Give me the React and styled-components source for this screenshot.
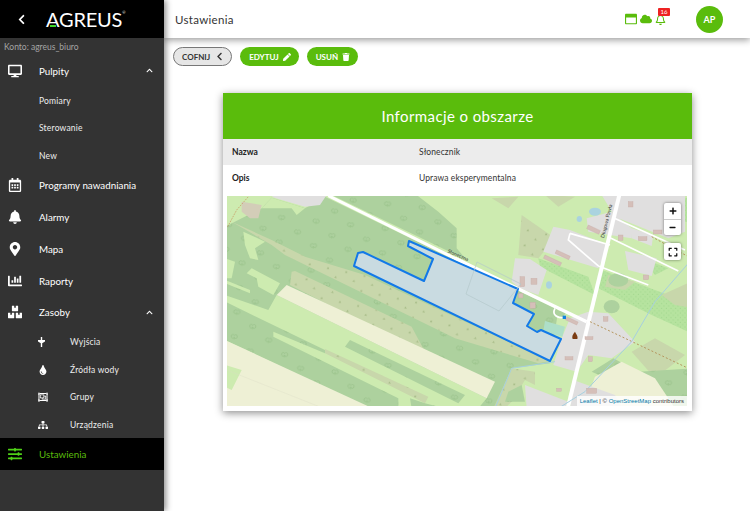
import React from 'react';
import styled, { createGlobalStyle } from 'styled-components';
import {
    FaDesktop, FaChevronUp, FaChevronLeft, FaRegCalendarAlt, FaBell, FaMapMarkerAlt, FaChartBar,
    FaBoxes, FaTint, FaRegObjectGroup, FaSitemap, FaSlidersH, FaPen, FaTrash, FaCloud,
    FaRegWindowMaximize, FaRegBell, FaPlus, FaMinus, FaExpand,
} from 'react-icons/fa';

const GREEN = '#5abc0c';
const FONT = 'Lato, "Open Sans", sans-serif';

const GlobalStyle = createGlobalStyle`
    html, body { margin: 0; padding: 0; background: #fff; }
    * { box-sizing: border-box; }
    body { font-family: ${FONT}; overflow: hidden; }
`;

const PlugIcon = () => (
    <svg width="7" height="10" viewBox="0 0 7 10" fill="#fff">
        <path d="M2.800 0h1.400v3H7v1.400L4.200 6.200V10H2.800V6.200L0 4.400V3h2.800z" />
    </svg>
);

const menu = [
    { label: 'Pulpity', icon: <FaDesktop />, open: true, children: [{ label: 'Pomiary' }, { label: 'Sterowanie' }, { label: 'New' }] },
    { label: 'Programy nawadniania', icon: <FaRegCalendarAlt /> },
    { label: 'Alarmy', icon: <FaBell /> },
    { label: 'Mapa', icon: <FaMapMarkerAlt /> },
    { label: 'Raporty', icon: <FaChartBar /> },
    {
        label: 'Zasoby', icon: <FaBoxes />, open: true, children: [
            { label: 'Wyjścia', icon: <PlugIcon /> },
            { label: 'Źródła wody', icon: <FaTint /> },
            { label: 'Grupy', icon: <FaRegObjectGroup /> },
            { label: 'Urządzenia', icon: <FaSitemap /> },
        ],
    },
];

const forest = '#add19e';
const grass = '#cdebb0';
const farm = '#eef0d5';
const scrub = '#c8d7ab';
const built = '#e0dfdf';

const Wood = ({ points }) => (
    <>
        <polygon points={points} fill={forest} />
        <polygon points={points} fill="url(#trees)" />
    </>
);

const Scrub = ({ points }) => (
    <>
        <polygon points={points} fill={scrub} />
        <polygon points={points} fill="url(#shrubs)" />
    </>
);

// geometry is in 3x coordinates; the right hand group starts 690 further along
const AreaMap = () => (
    <MapSvg viewBox="0 0 460 210" preserveAspectRatio="none">
        <defs>
            <pattern id="trees" width="104" height="74" patternUnits="userSpaceOnUse" patternTransform="rotate(6)">
                <g fill="none" stroke="#94bf85" strokeWidth="2">
                    <path d="M20 10c-5-6-12 0-8 7c2 3 5 2 8-1c3 3 6 4 8 1c4-7-3-13-8-7zM20 16v6" />
                    <path d="M72 46c-5-6-12 0-8 7c2 3 5 2 8-1c3 3 6 4 8 1c4-7-3-13-8-7zM72 52v6" />
                </g>
            </pattern>
            <pattern id="shrubs" width="56" height="46" patternUnits="userSpaceOnUse" patternTransform="rotate(12)">
                <path d="M12 8l4 7h-8zM40 30l4 7h-8z" fill="#a7bc88" />
            </pattern>
            <pattern id="meadow" width="14" height="14" patternUnits="userSpaceOnUse">
                <rect width="14" height="14" fill="#b6e39f" />
                <circle cx="4" cy="4" r="1.600" fill="#9fd68c" />
                <circle cx="11" cy="11" r="1.600" fill="#9fd68c" />
            </pattern>
        </defs>
        <rect width="460" height="210" fill={grass} />

        <g transform="translate(-2 -1) scale(0.3333)">
            <Wood points="0,95 50,70 110,40 140,8 240,40 300,5 1000,345 975,505 860,520 810,640 0,640" />
            <Wood points="330,0 575,0 640,50 695,100 695,160 725,195 320,0" />
            <polygon points="55,110 120,140 90,160 100,195 75,190 60,150" fill={grass} />
            <polygon points="0,190 30,200 20,250 0,250" fill={grass} />
            <polygon points="65,235 80,220 165,265 145,300 100,275 95,250" fill={grass} />
            <polygon points="0,265 75,295 75,285 0,255" fill={grass} />
            <Scrub points="20,80 140,135 240,185 420,240 975,498 940,505 690,430 180,180 140,150" />
            <Scrub points="200,230 210,228 560,395 600,470 400,375 195,270" />
            <polygon points="0,300 130,345 155,300 785,610 760,640 0,640" fill={grass} />
            <polygon points="155,300 185,270 810,560 785,610" fill={farm} />
            <Wood points="0,320 300,465 300,475 145,410 145,425 520,610 520,640 430,640 0,435" />
            <Wood points="360,455 375,435 720,600 700,625" />
            <Scrub points="300,462 610,605 600,625 300,475" />
            <polygon points="0,435 430,634 0,640" fill={farm} />
            <polygon points="0,510 50,525 20,585 0,575" fill={grass} />
            <Wood points="555,610 600,625 660,640 560,640" />
            <polygon points="50,20 110,30 100,70 75,70 50,50" fill="#d3cdb8" />
            <polygon points="140,5 155,0 305,0 285,30 240,35 160,12" fill={built} />
            <polygon points="110,40 140,8 240,40 215,60 200,40" fill={grass} />
            <path d="M8 95L35 45L70 5" stroke="#c98f5a" strokeWidth="2" strokeDasharray="5 3" fill="none" />
            <path d="M310 2L720 205" stroke="#fff" strokeWidth="9" fill="none" />
            <path d="M5 525L280 634" stroke="#dcdcc4" strokeWidth="1" fill="none" />
        </g>

        <g transform="translate(228 -1) scale(0.3333)">
            <polygon points="110,10 190,5 160,40" fill={scrub} />
            <Scrub points="200,60 300,130 250,190 190,180" />
            <polygon points="270,0 360,5 310,35" fill={scrub} />
            <polygon points="250,190 400,245 420,300 380,280 255,215" fill="url(#meadow)" />
            <polygon points="275,145 300,150 285,175 270,170" fill="url(#meadow)" />
            <polygon points="440,225 720,330 720,420 590,360 430,280" fill="url(#meadow)" />
            <polygon points="560,190 640,220 600,240" fill="url(#meadow)" />
            <polygon points="660,20 720,0 720,80 690,80" fill="url(#meadow)" />
            <polygon points="460,240 540,260 510,285 450,275" fill={scrub} />
            <polygon points="620,300 720,255 720,340 660,330" fill={scrub} />
            <polygon points="530,470 600,430 690,480 600,550" fill={scrub} />
            <Wood points="475,490 550,530 720,520 720,640 660,640 410,530" />
            <polygon points="420,545 500,500 600,550 660,640 385,640" fill={farm} />
            <Scrub points="170,520 240,530 240,570 210,555 170,620 150,640 115,640" />
            <Wood points="160,590 200,570 210,620 150,620" />

            <polygon points="180,190 225,192 275,225 250,300 195,280 170,260" fill={built} />
            <polygon points="295,95 345,105 460,150 430,220 265,170" fill={built} />
            <polygon points="395,70 470,50 530,100 530,130 400,110" fill={built} />
            <polygon points="440,0 690,0 690,110 640,130 480,65" fill={built} />
            <polygon points="525,98 595,120 590,153 530,130" fill={built} />
            <polygon points="510,168 605,190 590,243 520,225" fill={built} />
            <polygon points="400,350 460,355 540,440 470,490 400,480 365,530 295,510 320,430 345,370" fill={built} />
            <polygon points="355,555 480,600 500,640 345,640" fill={built} />
            <polygon points="210,570 340,620 330,640 215,640" fill={built} />
            <polygon points="270,378 330,395 322,425 265,408" fill="#aedfc8" />
            <polygon points="300,345 335,350 320,370 300,362" fill={forest} />
            <ellipse cx="420" cy="50" rx="18" ry="12" fill="#aad3df" />
            <ellipse cx="373" cy="72" rx="8" ry="9" fill="#aad3df" />
            <ellipse cx="282" cy="270" rx="9" ry="11" fill="#aad3df" />
            <ellipse cx="470" cy="335" rx="24" ry="20" fill={forest} />
            <ellipse cx="490" cy="255" rx="30" ry="20" fill={forest} />

            <path d="M0 190L395 380" stroke="#fff" strokeWidth="10" fill="none" />
            <path d="M493 0L338 640" stroke="#fff" strokeWidth="12" fill="none" />
            <path d="M475 68L690 165M465 128L670 228M430 213L580 270M345 115L465 150M345 115L340 135L430 213" stroke="#fff" strokeWidth="5" fill="none" />
            <path d="M300 340C290 360 305 370 335 368" stroke="#fff" strokeWidth="5" fill="none" />
            <path d="M405 380L700 520M590 125L700 185" stroke="#b5965e" strokeWidth="3" strokeDasharray="6 6" fill="none" />
            <path d="M700 205L600 320L530 440L390 590L310 640M120 640L170 520L300 500" stroke="#a6cfdf" strokeWidth="3" fill="none" />
            <g fill="#d5bfb9" stroke="#c5a9a3" strokeWidth="1">
                <rect x="400" y="90" width="40" height="12" transform="rotate(25 400 90)" />
                <rect x="305" y="165" width="45" height="11" transform="rotate(25 305 165)" />
                <rect x="270" y="180" width="55" height="11" transform="rotate(25 270 180)" />
                <rect x="195" y="245" width="14" height="30" />
                <rect x="228" y="250" width="18" height="18" />
                <rect x="190" y="295" width="14" height="14" />
                <rect x="225" y="322" width="16" height="18" />
                <rect x="335" y="365" width="38" height="10" transform="rotate(25 335 365)" />
                <rect x="390" y="425" width="24" height="9" />
                <rect x="400" y="485" width="12" height="15" />
                <rect x="330" y="485" width="24" height="10" />
                <rect x="490" y="120" width="14" height="16" />
                <rect x="550" y="125" width="26" height="12" />
                <rect x="595" y="105" width="26" height="12" />
                <rect x="565" y="240" width="16" height="14" />
                <rect x="445" y="365" width="14" height="14" />
                <rect x="395" y="580" width="30" height="15" />
                <rect x="305" y="580" width="14" height="9" />
                <rect x="520" y="20" width="14" height="16" />
            </g>
            <rect x="323" y="362" width="10" height="10" fill="#1282e0" />
            <path d="M360 410c-7 8-10 14-7 22h14c3-8-3-14-7-22z" fill="#7a3b12" />
        </g>

        <polygon
            points="182,45 181,50 206,63 197,85 136,56 131,57 127,70 323,165 334,143 314,134 310,136 300,130 307,118 286,107 291,93"
            fill="#c9dbe1" stroke="#1279e8" strokeWidth="2" strokeLinejoin="round"
        />
        <path d="M239 98L250 66L294 88L272 115z" stroke="#b4c8cb" strokeWidth="0.700" fill="none" />
    </MapSvg>
);

const App = () => (
    <>
        <GlobalStyle />
        <Page>
            <Sidebar>
                <LogoBar>
                    <BackArrow><FaChevronLeft /></BackArrow>
                    <Logo>
                        AGREUS<LogoMark>®</LogoMark>
                        <LogoDash />
                    </Logo>
                </LogoBar>
                <Account>Konto: agreus_biuro</Account>
                <nav>
                    {menu.map((item) => (
                        <React.Fragment key={item.label}>
                            <NavItem>
                                <NavIcon>{item.icon}</NavIcon>
                                <NavLabel>{item.label}</NavLabel>
                                {item.open && <Caret><FaChevronUp /></Caret>}
                            </NavItem>
                            {item.children && item.children.map((child) => (
                                <SubItem key={child.label} $withIcon={!!child.icon}>
                                    {child.icon && <SubIcon>{child.icon}</SubIcon>}
                                    {child.label}
                                </SubItem>
                            ))}
                        </React.Fragment>
                    ))}
                    <NavItem $active>
                        <NavIcon $active><FaSlidersH /></NavIcon>
                        <NavLabel>Ustawienia</NavLabel>
                    </NavItem>
                </nav>
            </Sidebar>
            <Main>
                <TopBar>
                    <Title>Ustawienia</Title>
                    <StatusIcons>
                        <FaRegWindowMaximize size={12} />
                        <FaCloud size={12} />
                        <BellWrap>
                            <FaRegBell size={11} />
                            <Badge>16</Badge>
                        </BellWrap>
                    </StatusIcons>
                    <Avatar>AP</Avatar>
                </TopBar>
                <Actions>
                    <BackButton>COFNIJ <FaChevronLeft size={9} /></BackButton>
                    <ActionButton>EDYTUJ <FaPen size={8} /></ActionButton>
                    <ActionButton>USUŃ <FaTrash size={8} /></ActionButton>
                </Actions>
                <Card>
                    <CardTitle>Informacje o obszarze</CardTitle>
                    <InfoRow $shaded>
                        <InfoKey>Nazwa</InfoKey>
                        <InfoValue>Słonecznik</InfoValue>
                    </InfoRow>
                    <InfoRow>
                        <InfoKey>Opis</InfoKey>
                        <InfoValue>Uprawa eksperymentalna</InfoValue>
                    </InfoRow>
                    <MapBox>
                        <AreaMap />
                        <RoadName>Słoneczna</RoadName>
                        <SideRoadName>Długowa Pawła</SideRoadName>
                        <ZoomGroup>
                            <ZoomBtn><FaPlus size={8} /></ZoomBtn>
                            <ZoomBtn><FaMinus size={7} /></ZoomBtn>
                        </ZoomGroup>
                        <FullBtn><FaExpand size={10} /></FullBtn>
                        <Attribution><b>Leaflet</b> | © <b>OpenStreetMap</b> contributors</Attribution>
                    </MapBox>
                </Card>
            </Main>
        </Page>
    </>
);

export default App;

const Page = styled.div`
    width: 750px;
    height: 511px;
    display: flex;
    overflow: hidden;
`;

const Sidebar = styled.aside`
    width: 164px;
    flex: none;
    background: #333;
    color: #fff;
    box-shadow: 2px 0 6px rgba(0, 0, 0, 0.45);
    position: relative;
    z-index: 2;
`;

const LogoBar = styled.div`
    height: 38px;
    background: #000;
    display: flex;
    align-items: center;
    padding-left: 16px;
`;

const BackArrow = styled.span`
    width: 30px;
    font-size: 11px;
    display: flex;
`;

const Logo = styled.div`
    position: relative;
    font-size: 20px;
    font-weight: 400;
    letter-spacing: -0.2px;
    line-height: 1;
`;

const LogoMark = styled.sup`
    font-size: 4px;
    vertical-align: 13px;
    line-height: 0;
`;

const LogoDash = styled.span`
    position: absolute;
    left: 4px;
    bottom: 2px;
    width: 6px;
    height: 2px;
    background: #3fd62a;
`;

const Account = styled.div`
    height: 17px;
    padding-left: 4px;
    font-size: 8.500px;
    line-height: 18px;
    color: #a5a5a5;
`;

const NavItem = styled.div`
    height: ${(p) => (p.$active ? '32px' : '31.8px')};
    display: flex;
    align-items: center;
    padding-right: 10px;
    background: ${(p) => (p.$active ? '#000' : 'transparent')};
    color: ${(p) => (p.$active ? GREEN : '#fff')};
`;

const NavIcon = styled.span`
    width: 39px;
    flex: none;
    display: flex;
    justify-content: center;
    padding-right: 9px;
    font-size: 14px;
    color: ${(p) => (p.$active ? '#4fd117' : '#fff')};
`;

const NavLabel = styled.span`
    flex: 1;
    font-size: 9.800px;
    font-weight: 400;
`;

const Caret = styled.span`
    display: flex;
    font-size: 7px;
    margin-right: 1px;
`;

const SubItem = styled.div`
    height: 27.500px;
    display: flex;
    align-items: center;
    font-size: 8.500px;
    letter-spacing: 0.2px;
    padding-left: ${(p) => (p.$withIcon ? '35px' : '39px')};
    color: #eee;
`;

const SubIcon = styled.span`
    width: 35px;
    flex: none;
    display: flex;
    padding-left: 3px;
    font-size: 10px;
    color: #fff;
`;

const Main = styled.main`
    flex: 1;
    min-width: 0;
    background: #fff;
`;

const TopBar = styled.header`
    height: 38px;
    display: flex;
    align-items: center;
    padding: 0 27px 0 11px;
    box-shadow: 0 2px 7px rgba(0, 0, 0, 0.4);
`;

const Title = styled.h1`
    flex: 1;
    margin: 0;
    font-size: 11.500px;
    font-weight: 400;
    letter-spacing: 0.3px;
    color: #333;
`;

const StatusIcons = styled.div`
    display: flex;
    align-items: center;
    gap: 2.500px;
    color: ${GREEN};
    margin-right: 30px;
`;

const BellWrap = styled.span`
    position: relative;
    display: flex;
    margin-left: 1px;
`;

const Badge = styled.span`
    position: absolute;
    left: 3px;
    top: -6px;
    width: 12px;
    height: 8px;
    border-radius: 1px;
    background: #ee2222;
    color: #fff;
    font-size: 6px;
    line-height: 8px;
    text-align: center;
`;

const Avatar = styled.div`
    width: 27px;
    height: 27px;
    border-radius: 50%;
    background: ${GREEN};
    color: #fff;
    font-size: 9px;
    font-weight: 700;
    display: flex;
    align-items: center;
    justify-content: center;
`;

const Actions = styled.div`
    display: flex;
    gap: 8px;
    padding: 9px 0 0 9px;
    height: 55px;
`;

const ActionButton = styled.button`
    height: 19px;
    padding: 0 8px 0 9px;
    border: 0;
    border-radius: 10px;
    background: ${GREEN};
    color: #fff;
    font-family: ${FONT};
    font-size: 8px;
    font-weight: 700;
    display: flex;
    align-items: center;
    gap: 4px;
`;

const BackButton = styled(ActionButton)`
    background: #e6e6e6;
    color: #333;
    border: 1px solid #777;
    padding: 0 7px 0 8px;
    gap: 5px;
`;

const Card = styled.section`
    width: 469px;
    height: 318px;
    margin-left: 59px;
    background: #fff;
    box-shadow: 0 2px 8px rgba(0, 0, 0, 0.45);
`;

const CardTitle = styled.h2`
    margin: 0;
    height: 46px;
    background: ${GREEN};
    color: #fff;
    font-size: 15px;
    font-weight: 400;
    letter-spacing: 0.4px;
    display: flex;
    align-items: center;
    justify-content: center;
`;

const InfoRow = styled.div`
    height: 26px;
    display: grid;
    grid-template-columns: 187px 1fr;
    align-items: center;
    padding-left: 9px;
    background: ${(p) => (p.$shaded ? '#ececec' : '#fff')};
`;

const InfoKey = styled.span`
    font-size: 8.500px;
    font-weight: 700;
    color: #222;
`;

const InfoValue = styled.span`
    font-size: 8.500px;
    color: #333;
    letter-spacing: 0.1px;
`;

const MapBox = styled.div`
    position: relative;
    width: 460px;
    height: 210px;
    margin: 5px 0 0 4px;
    overflow: hidden;
`;

const MapSvg = styled.svg`
    display: block;
    width: 100%;
    height: 100%;
`;

const RoadName = styled.span`
    position: absolute;
    left: 220px;
    top: 56px;
    font-size: 5px;
    color: #333;
    transform: rotate(24deg);
`;

const SideRoadName = styled(RoadName)`
    left: 362px;
    top: 22px;
    transform: rotate(-76deg);
`;

const ZoomGroup = styled.div`
    position: absolute;
    top: 7px;
    right: 6px;
    width: 17px;
    border-radius: 2px;
    background: #fff;
    box-shadow: 0 0 3px rgba(0, 0, 0, 0.5);
`;

const ZoomBtn = styled.div`
    height: 16px;
    display: flex;
    align-items: center;
    justify-content: center;
    color: #111;
    & + & { border-top: 1px solid #ccc; }
`;

const FullBtn = styled.div`
    position: absolute;
    top: 47px;
    right: 6px;
    width: 17px;
    height: 17px;
    border-radius: 2px;
    background: #fff;
    box-shadow: 0 0 3px rgba(0, 0, 0, 0.5);
    display: flex;
    align-items: center;
    justify-content: center;
    color: #111;
`;

const Attribution = styled.div`
    position: absolute;
    right: 0;
    bottom: 0;
    padding: 0 3px;
    height: 10px;
    line-height: 10px;
    font-size: 6px;
    color: #333;
    background: rgba(255, 255, 255, 0.8);
    font-family: "Liberation Sans", sans-serif;
    b { font-weight: 400; color: #0078a8; }
`;
